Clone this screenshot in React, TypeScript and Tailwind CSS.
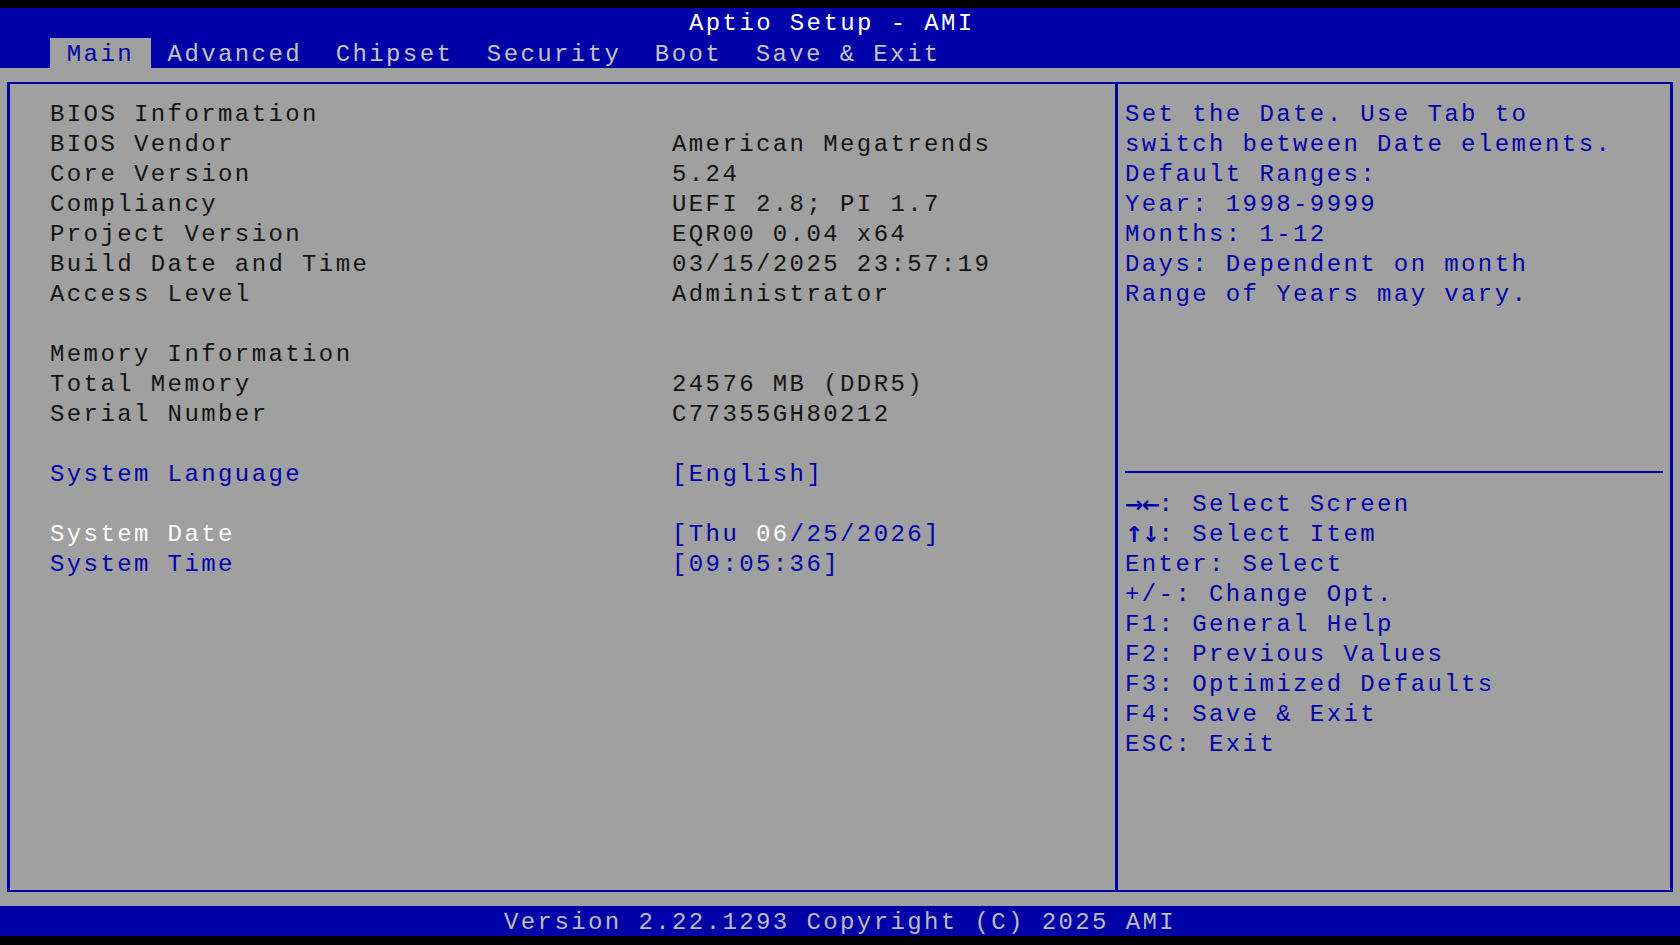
const tabs = ["Main", "Advanced", "Chipset", "Security", "Boot", "Save & Exit"];

const helpLines = [
  "Set the Date. Use Tab to",
  "switch between Date elements.",
  "Default Ranges:",
  "Year: 1998-9999",
  "Months: 1-12",
  "Days: Dependent on month",
  "Range of Years may vary.",
];

const keyLines: [string, string][] = [
  ["→←", ": Select Screen"],
  ["↑↓", ": Select Item"],
  ["", "Enter: Select"],
  ["", "+/-: Change Opt."],
  ["", "F1: General Help"],
  ["", "F2: Previous Values"],
  ["", "F3: Optimized Defaults"],
  ["", "F4: Save & Exit"],
  ["", "ESC: Exit"],
];

function Line({
  label,
  value,
  labelClass = "text-[#141414]",
  valueClass = "text-[#141414]",
}: {
  label?: string;
  value?: React.ReactNode;
  labelClass?: string;
  valueClass?: string;
}) {
  return (
    <div className="flex h-[30px] leading-[30px] whitespace-pre">
      <span className={`w-[622px] ${labelClass}`}>{label ?? ""}</span>
      <span className={valueClass}>{value ?? ""}</span>
    </div>
  );
}

export default function App() {
  return (
    <div className="w-[1680px] h-[945px] bg-black flex flex-col font-['Liberation_Mono','DejaVu_Sans_Mono',monospace] text-[24px] tracking-[2.4px]">
      <div className="h-[8px]" />

      {/* header */}
      <div className="h-[60px] bg-[#0000a8] flex flex-col">
        <div className="h-[30px] pt-[2px] leading-[28px] pl-[689px] text-white whitespace-pre">
          Aptio Setup - AMI
        </div>
        <div className="h-[30px] flex pl-[50px]">
          {tabs.map((t, i) => (
            <div
              key={t}
              className={
                i === 0
                  ? "h-[30px] px-[16.8px] pt-[4px] leading-[26px] bg-[#a0a0a0] text-[#0000a8] whitespace-pre"
                  : "h-[30px] px-[16.8px] pt-[4px] leading-[26px] text-[#c4c4c4] whitespace-pre"
              }
            >
              {t}
            </div>
          ))}
        </div>
      </div>

      {/* body */}
      <div className="h-[838px] bg-[#a0a0a0] px-[7px] py-[14px]">
        <div className="h-full flex border-x-[3px] border-y-2 border-[#0000a0]">
          <div className="w-[1105px] pl-[40px] pt-[16px]">
            <Line label="BIOS Information" />
            <Line label="BIOS Vendor" value="American Megatrends" />
            <Line label="Core Version" value="5.24" />
            <Line label="Compliancy" value="UEFI 2.8; PI 1.7" />
            <Line label="Project Version" value="EQR00 0.04 x64" />
            <Line label="Build Date and Time" value="03/15/2025 23:57:19" />
            <Line label="Access Level" value="Administrator" />
            <Line />
            <Line label="Memory Information" />
            <Line label="Total Memory" value="24576 MB (DDR5)" />
            <Line label="Serial Number" value="C77355GH80212" />
            <Line />
            <Line
              label="System Language"
              value="[English]"
              labelClass="text-[#0000a8]"
              valueClass="text-[#0000a8]"
            />
            <Line />
            <Line
              label="System Date"
              value={
                <>
                  [Thu <span className="text-white">06</span>/25/2026]
                </>
              }
              labelClass="text-white"
              valueClass="text-[#0000a8]"
            />
            <Line
              label="System Time"
              value="[09:05:36]"
              labelClass="text-[#0000a8]"
              valueClass="text-[#0000a8]"
            />
          </div>

          <div className="w-[3px] bg-[#0000a0]" />

          <div className="flex-1 px-[7px] pt-[16px] text-[#0000a8] flex flex-col">
            {helpLines.map((l) => (
              <div key={l} className="h-[30px] leading-[30px] whitespace-pre">
                {l}
              </div>
            ))}
            <div className="h-[150px]" />
            <div className="h-[30px] pt-[11px]">
              <div className="h-[2px] bg-[#0000a0]" />
            </div>
            {keyLines.map(([arrows, text]) => (
              <div key={text} className="h-[30px] leading-[30px] whitespace-pre flex">
                {arrows &&
                  arrows.split("").map((a) => (
                    <span
                      key={a}
                      className="inline-block w-[16.8px] text-center tracking-normal font-bold font-['DejaVu_Sans',sans-serif] text-[22px]"
                    >
                      {a}
                    </span>
                  ))}
                <span>{text}</span>
              </div>
            ))}
          </div>
        </div>
      </div>

      {/* footer */}
      <div className="h-[30px] bg-[#0000a8] pt-[4px] leading-[26px] pl-[504px] text-[#bcbcbc] whitespace-pre">
        Version 2.22.1293 Copyright (C) 2025 AMI
      </div>
      <div className="flex-1" />
    </div>
  );
}
